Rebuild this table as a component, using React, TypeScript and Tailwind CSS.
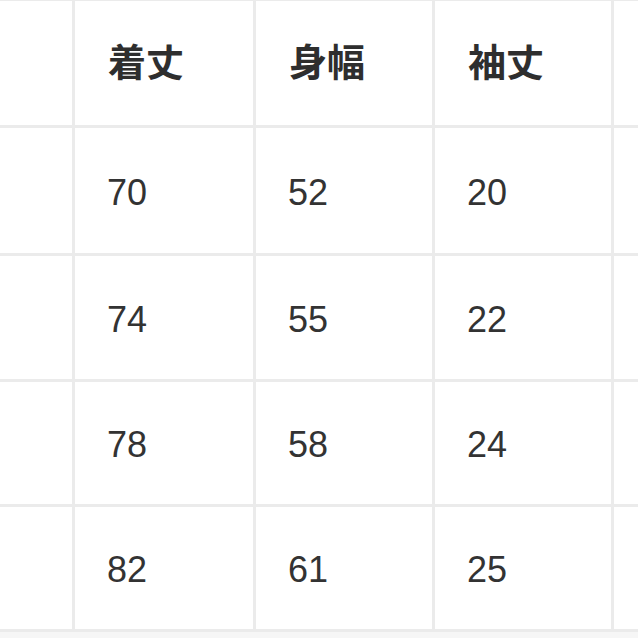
const headers = ["着丈", "身幅", "袖丈"]

const rows = [
  { h: "h-[125px]", vals: ["70", "52", "20"] },
  { h: "h-[123px]", vals: ["74", "55", "22"] },
  { h: "h-[122px]", vals: ["78", "58", "24"] },
  { h: "h-[122px]", vals: ["82", "61", "25"] },
]

export default function App() {
  return (
    <div className="w-[638px] h-[638px] overflow-hidden bg-[#f6f6f6]">
      <div
        className="grid grid-cols-[72px_178px_176px_176px_1fr] gap-[3px] bg-[#ebebeb] pt-[1px] pb-[3px] text-[#333333]"
        style={{ fontFamily: '"Liberation Sans", Arial, "Noto Sans CJK JP", sans-serif' }}
      >
        {/* header */}
        <div className="h-[124px] bg-white" />
        {headers.map((t) => (
          <div
            key={t}
            className="h-[124px] bg-white flex items-center pl-[33px] pb-[8px] text-[38px] font-bold text-[#2e2e2e]"
            style={{ fontFamily: '"Noto Sans CJK JP", sans-serif' }}
          >
            {t}
          </div>
        ))}
        <div className="h-[124px] bg-white" />

        {rows.map((r, i) => (
          <div key={i} className="contents">
            <div className={`${r.h} bg-white`} />
            {r.vals.map((v, j) => (
              <div
                key={j}
                className={`${r.h} bg-white flex items-center pl-[32px] text-[36px] pt-[4px]`}
              >
                {v}
              </div>
            ))}
            <div className={`${r.h} bg-white`} />
          </div>
        ))}
      </div>
    </div>
  )
}
